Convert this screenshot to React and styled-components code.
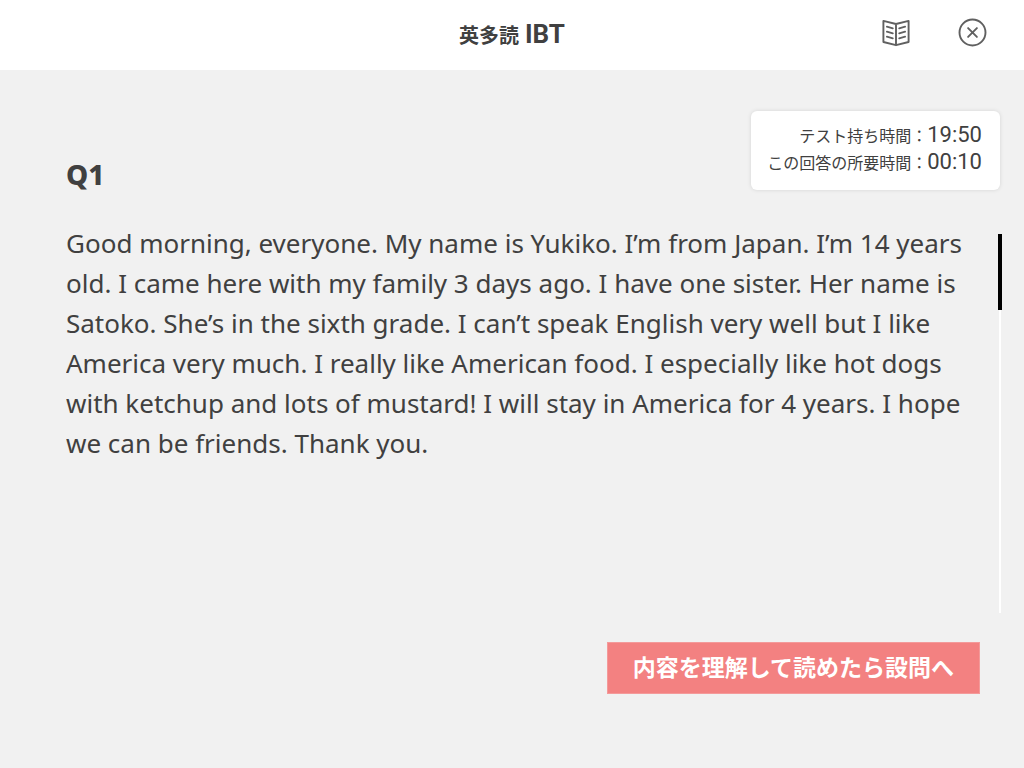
import React, { useRef, useState } from "react";
import styled, { createGlobalStyle } from "styled-components";

const GlobalStyle = createGlobalStyle`
  * {
    box-sizing: border-box;
  }
  body {
    margin: 0;
    background: #f1f1f1;
    color: #404040;
    font-family: "Noto Sans", "Noto Sans CJK JP", sans-serif;
  }
`;

const Header = styled.header`
  display: grid;
  grid-template-columns: 1fr auto 1fr;
  align-items: center;
  height: 70px;
  padding: 0 37px;
  background: #fff;
`;

const Title = styled.h1`
  grid-column: 2;
  display: flex;
  align-items: baseline;
  gap: 6px;
  margin: 0;
  font-size: 20px;
  line-height: 36px;
  font-weight: 700;
`;

const TitleMark = styled.span`
  font-family: Roboto, sans-serif;
  font-size: 26px;
`;

const HeaderActions = styled.div`
  display: flex;
  justify-content: flex-end;
  gap: 46px;
  padding-bottom: 4px;
`;

const IconButton = styled.button`
  display: flex;
  padding: 0;
  border: 0;
  background: none;
  color: #606060;
  cursor: pointer;

  svg {
    width: 30px;
    height: 30px;
    fill: none;
    stroke: currentColor;
    stroke-width: 1.9;
    stroke-linecap: round;
    stroke-linejoin: round;
  }
`;

const Main = styled.main`
  padding: 41px 24px 0 66px;
`;

const TopRow = styled.div`
  display: flex;
  justify-content: space-between;
  align-items: flex-end;
`;

const QuestionNumber = styled.h2`
  margin: 0;
  font-size: 28px;
  line-height: 32px;
  font-weight: 800;
`;

const Timers = styled.dl`
  margin: 0;
  padding: 10px 18px 15px 16px;
  border-radius: 6px;
  background: #fff;
  box-shadow: 0 0 4px rgba(0, 0, 0, 0.12);
`;

const TimerRow = styled.div`
  display: flex;
  justify-content: flex-end;
  align-items: baseline;
  line-height: 27px;
`;

const TimerLabel = styled.dt`
  font-family: "Noto Sans CJK JP", sans-serif;
  font-size: 16px;
  line-height: 20px;
`;

const TimerValue = styled.dd`
  margin: 0;
  font-family: Roboto, sans-serif;
  font-size: 22px;
`;

const Reader = styled.section`
  display: flex;
  justify-content: space-between;
  height: 379px;
  margin: 44px -2px 0 0;
`;

const Passage = styled.div`
  flex: 1;
  margin-right: 32px;
  margin-top: -11px;
  overflow-y: auto;
  scrollbar-width: none;

  p {
    margin: 0;
    font-size: 26px;
    line-height: 40px;
  }
`;

const ScrollTrack = styled.div`
  flex: none;
  width: 4px;
  background: linear-gradient(#fff, #fff) center / 2px 100% no-repeat;
`;

const ScrollThumb = styled.div`
  height: 76px;
  background: #000;
`;

const Footer = styled.div`
  display: flex;
  justify-content: flex-end;
  padding: 29px 20px 0 0;
`;

const NextButton = styled.button`
  padding: 6px 25px 10px;
  border: 1px solid #f49a9a;
  background: #f38181;
  color: #fff;
  font-family: "Noto Sans CJK JP", sans-serif;
  font-size: 23px;
  line-height: 34px;
  font-weight: 700;
  cursor: pointer;
`;

const timers = [
  { label: "テスト持ち時間：", value: "19:50" },
  { label: "この回答の所要時間：", value: "00:10" },
];

const BookIcon = () => (
  <svg viewBox="0 0 30 30" aria-hidden="true">
    <path d="M15 6 L2.4 2.9 V24 L15 27.2 L27.6 24 V2.9 Z M15 6 V27" />
    <path d="M5.9 8.7 L11.8 10.3 M5.9 13.7 L11.8 15.3 M5.9 18.7 L11.8 20.3" />
    <path d="M24.1 8.7 L18.2 10.3 M24.1 13.7 L18.2 15.3 M24.1 18.7 L18.2 20.3" />
  </svg>
);

const CloseIcon = () => (
  <svg viewBox="0 0 30 30" aria-hidden="true">
    <circle cx="15.5" cy="14.5" r="13" />
    <path d="M11.1 10.1 L19.9 18.9 M19.9 10.1 L11.1 18.9" />
  </svg>
);

const App = () => {
  const passageRef = useRef(null);
  const [offset, setOffset] = useState(0);

  const handleScroll = () => {
    const el = passageRef.current;
    const range = el.scrollHeight - el.clientHeight;
    setOffset(range > 0 ? (el.scrollTop / range) * 303 : 0);
  };

  return (
    <>
      <GlobalStyle />
      <Header>
        <Title>
          英多読 <TitleMark>IBT</TitleMark>
        </Title>
        <HeaderActions>
          <IconButton type="button" aria-label="辞書">
            <BookIcon />
          </IconButton>
          <IconButton type="button" aria-label="閉じる">
            <CloseIcon />
          </IconButton>
        </HeaderActions>
      </Header>
      <Main>
        <TopRow>
          <QuestionNumber>Q1</QuestionNumber>
          <Timers>
            {timers.map((timer) => (
              <TimerRow key={timer.label}>
                <TimerLabel>{timer.label}</TimerLabel>
                <TimerValue>{timer.value}</TimerValue>
              </TimerRow>
            ))}
          </Timers>
        </TopRow>
        <Reader>
          <Passage ref={passageRef} onScroll={handleScroll}>
            <p>
              Good morning, everyone. My name is Yukiko. I’m from Japan. I’m 14
              years old. I came here with my family 3 days ago. I have one
              sister. Her name is Satoko. She’s in the sixth grade. I can’t
              speak English very well but I like America very much. I really
              like American food. I especially like hot dogs with ketchup and
              lots of mustard! I will stay in America for 4 years. I hope we can
              be friends. Thank you.
            </p>
          </Passage>
          <ScrollTrack>
            <ScrollThumb style={{ transform: `translateY(${offset}px)` }} />
          </ScrollTrack>
        </Reader>
        <Footer>
          <NextButton type="button">内容を理解して読めたら設問へ</NextButton>
        </Footer>
      </Main>
    </>
  );
};

export default App;
